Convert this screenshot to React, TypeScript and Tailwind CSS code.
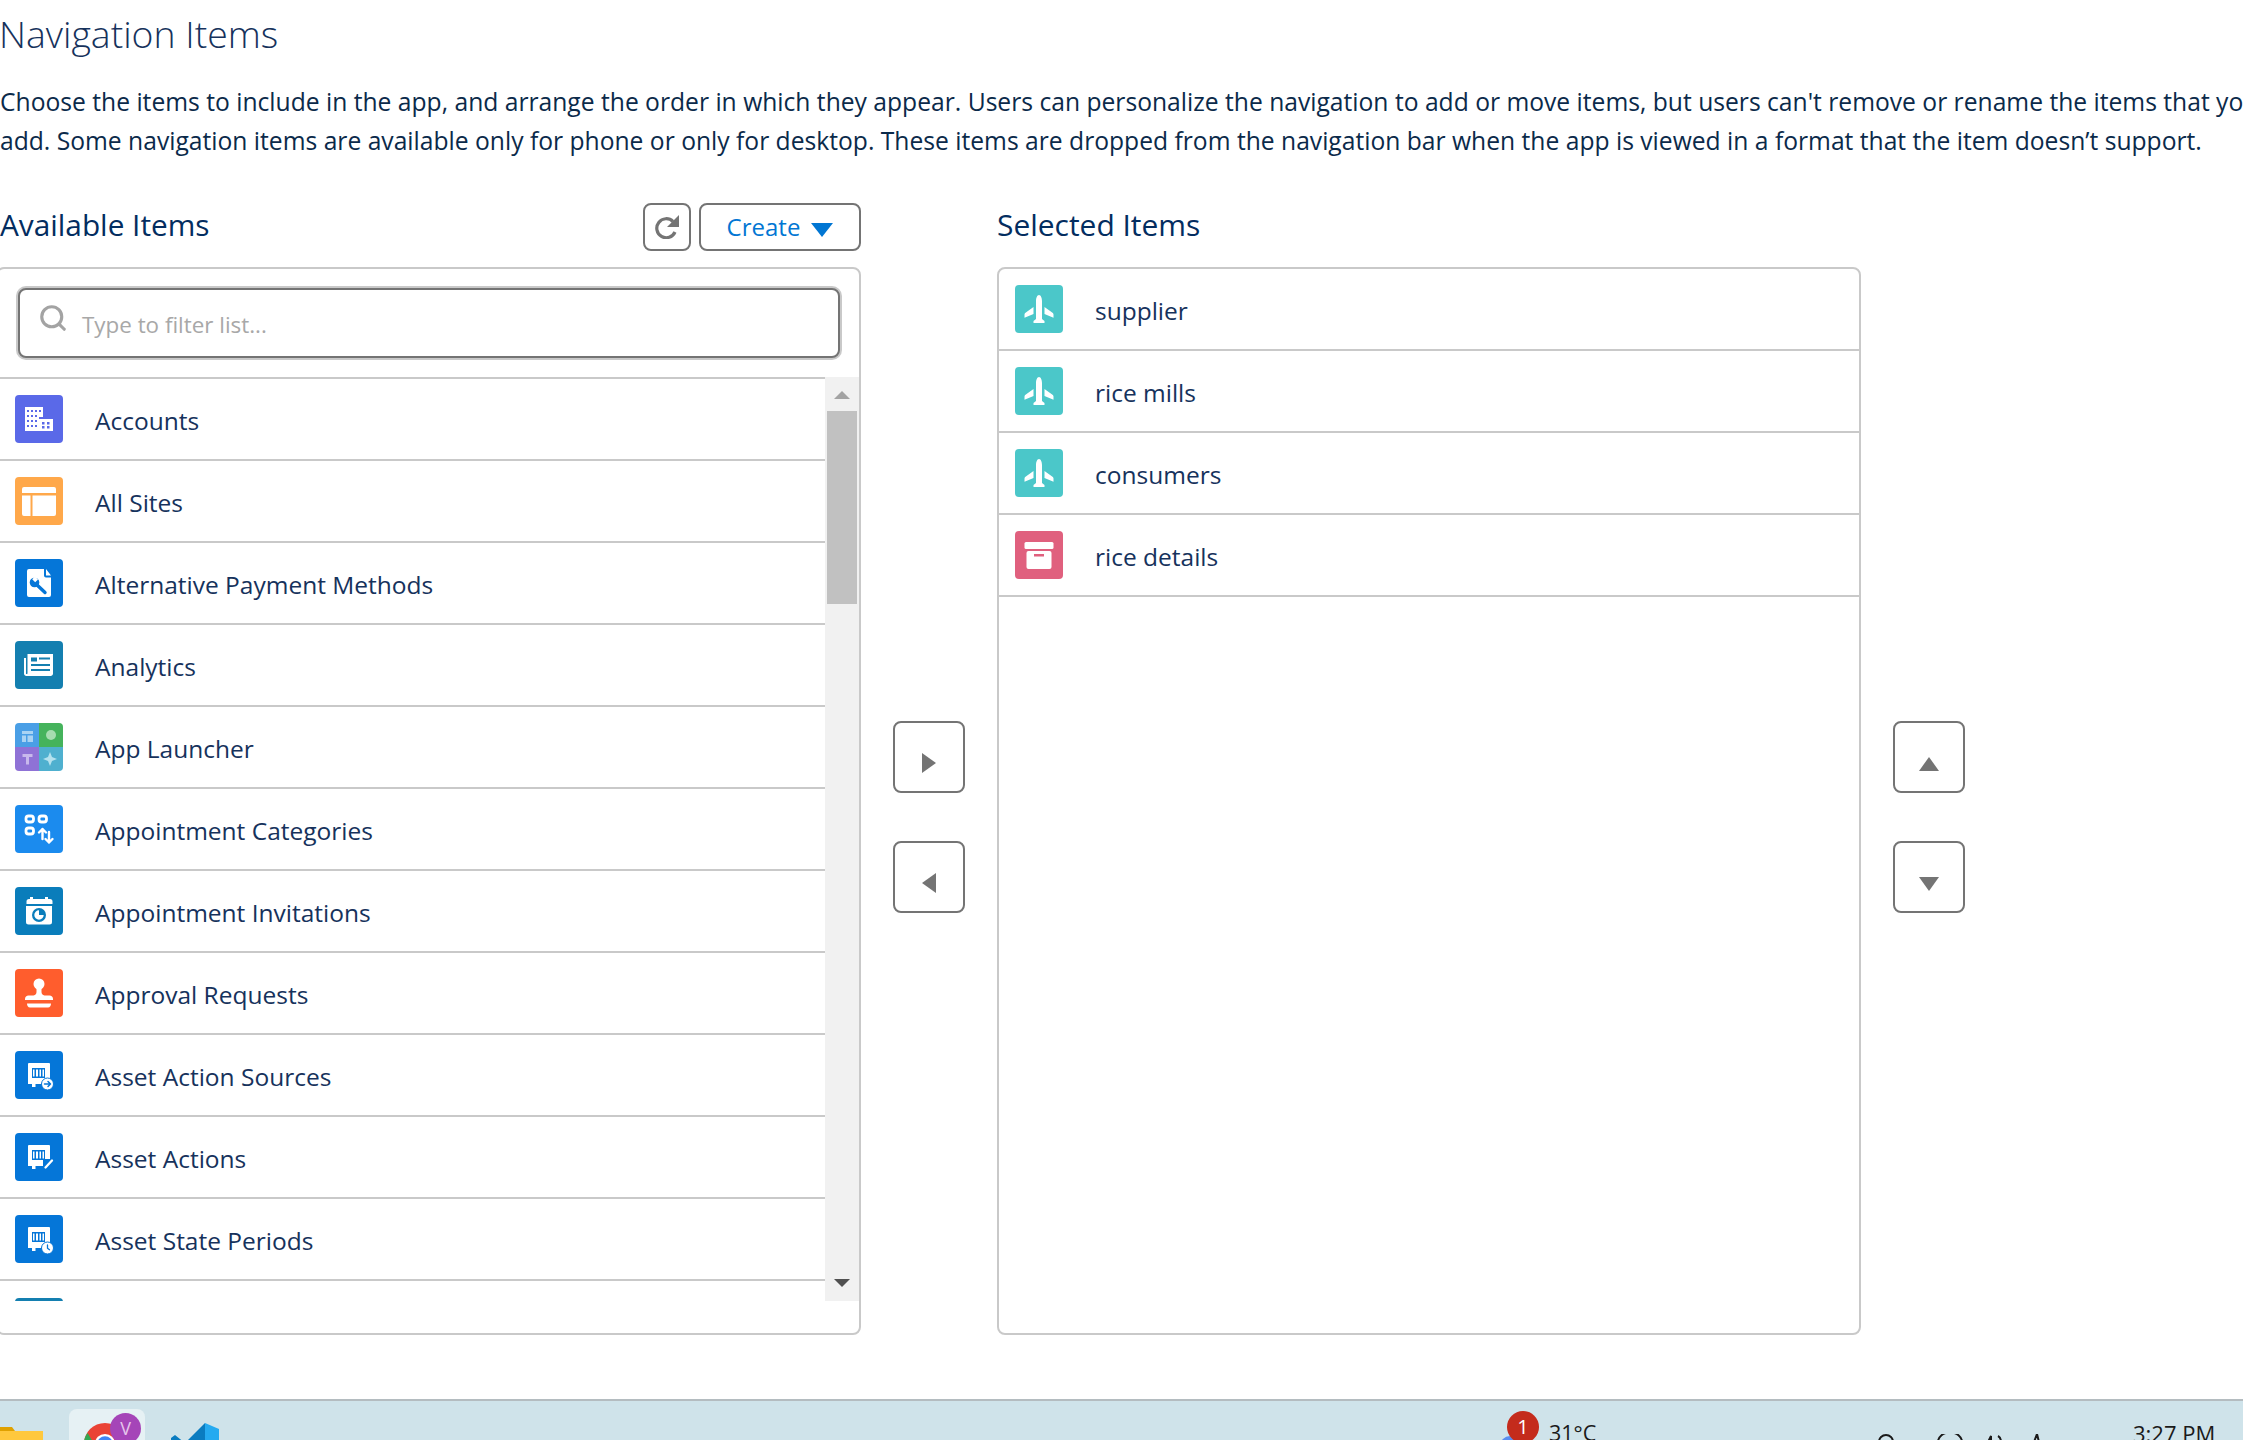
import React from 'react'
import { Search } from 'lucide-react'

const Tile = ({ color, children }: { color?: string; children?: React.ReactNode }) => (
  <svg viewBox="0 0 48 48" className="h-12 w-12 shrink-0 rounded-[4px]" style={{ background: color }}>
    {children}
  </svg>
)

const Plane = () => (
  <Tile color="#4bc7c9">
    <path fill="#fff" d="M24 10c1.800 0 3 3 3 6v18l2.500 2v2h-11v-2l2.500-2V16c0-3 1.200-6 3-6z" />
    <path fill="#fff" d="M18.500 22v7l-9 3.700V29.500c0-.8.400-1.400 1-1.800zM29.500 22v7l9 3.700V29.500c0-.8-.4-1.400-1-1.800z" />
  </Tile>
)

const Crate = () => (
  <Tile color="#e0607e">
    <rect x="9.500" y="11" width="29" height="7" rx="1.500" fill="#fff" />
    <rect x="11.500" y="20" width="25" height="18" rx="2" fill="#fff" />
    <rect x="19" y="23" width="10" height="2.500" fill="#e0607e" />
  </Tile>
)

const Accounts = () => (
  <Tile color="#5a69e8">
    <path fill="#fff" d="M10 12h18v10h-4v14H10z" />
    <rect x="24" y="24" width="14" height="12" fill="#fff" />
    <g fill="#5a69e8">
      <rect x="12" y="15" width="2" height="2" /><rect x="16" y="15" width="2" height="2" /><rect x="20" y="15" width="2" height="2" /><rect x="24" y="15" width="2" height="2" />
      <rect x="12" y="20" width="2" height="2" /><rect x="16" y="20" width="2" height="2" /><rect x="20" y="20" width="2" height="2" />
      <rect x="12" y="25" width="2" height="2" /><rect x="16" y="25" width="2" height="2" /><rect x="20" y="25" width="2" height="2" />
      <rect x="12" y="30" width="2" height="2" /><rect x="16" y="30" width="2" height="2" /><rect x="20" y="30" width="2" height="2" />
      <rect x="27" y="27" width="2.500" height="2.500" /><rect x="32" y="27" width="2.500" height="2.500" />
      <rect x="27" y="31" width="2.500" height="2.500" /><rect x="32" y="31" width="2.500" height="2.500" />
    </g>
  </Tile>
)

const AllSites = () => (
  <Tile color="#ffa84a">
    <path fill="#fff" d="M9 10h30a2 2 0 0 1 2 2v4H7v-4a2 2 0 0 1 2-2zM7 18.500h8.500V39H9a2 2 0 0 1-2-2zM17.500 18.500H41V37a2 2 0 0 1-2 2H17.500z" />
  </Tile>
)

const PaymentDoc = () => (
  <Tile color="#0576d8">
    <path fill="#fff" d="M14 10h15v6.500a2 2 0 0 0 2 2h5V36a2 2 0 0 1-2 2H14a2 2 0 0 1-2-2V12a2 2 0 0 1 2-2zM31 10l5 6.500h-5z" />
    <path stroke="#0576d8" strokeWidth="3.400" strokeLinecap="round" fill="none" d="M21 25l9 8.500" />
    <circle cx="19.500" cy="23.500" r="4.800" fill="#0576d8" />
    <path fill="#fff" d="M20 17.500l3 3-2.800 2.800-3-3z" />
  </Tile>
)

const Analytics = () => (
  <Tile color="#147fb0">
    <path fill="#fff" d="M12.500 13H38v19.500c0 1.400-1 2.500-2.500 2.500H11.500C10 35 9 33.900 9 32.500V17h2v15.500c0 .5.500.5.500.5s1 0 1-.5z" />
    <g fill="#147fb0">
      <rect x="16" y="16.500" width="6" height="4" /><rect x="24" y="16.500" width="11" height="2" />
      <rect x="16" y="23" width="19" height="2" /><rect x="16" y="28" width="19" height="2" />
    </g>
  </Tile>
)

const AppLauncher = () => (
  <Tile>
    <rect width="24" height="24" fill="#4a9fe6" />
    <rect x="24" width="24" height="24" fill="#45b35c" />
    <rect y="24" width="24" height="24" fill="#8f72d6" />
    <rect x="24" y="24" width="24" height="24" fill="#4fb0cf" />
    <path fill="#a9d3f3" d="M7 8h11v3H7zM7 12.500h4V19H7zM12.500 12.500H18V19h-5.500z" />
    <circle cx="36" cy="12" r="5" fill="#a6dcb0" />
    <path fill="#c8b8ec" d="M7.500 31h10v3h-3.500v7.500h-3V34H7.500z" />
    <path fill="#b5e2ee" d="M35 29l2 5 5 2-5 2-2 5-2-5-5-2 5-2z" />
  </Tile>
)

const Categories = () => (
  <Tile color="#1b8bee">
    <g fill="none" stroke="#fff" strokeWidth="2.800">
      <rect x="11" y="11" width="7.500" height="6" rx="2.500" />
      <rect x="24" y="11" width="7.500" height="6" rx="2.500" />
      <rect x="11" y="23" width="7.500" height="6" rx="2.500" />
    </g>
    <path fill="none" stroke="#fff" strokeWidth="2.400" strokeLinecap="round" strokeLinejoin="round" d="M27.500 34V24M24 27.500l3.500-3.500 3.500 3.500M34 27v10.500M30.500 34l3.500 3.500 3.500-3.500" />
  </Tile>
)

const Calendar = () => (
  <Tile color="#0a7dbb">
    <path fill="#fff" d="M15 10h3v2h12v-2h3v2h2a2.500 2.500 0 0 1 2.500 2.500V17h-26v-2.500A2.500 2.500 0 0 1 14 12h1zM11 19h26v16a2.500 2.500 0 0 1-2.500 2.500h-21A2.500 2.500 0 0 1 11 35z" />
    <circle cx="24" cy="28" r="7" fill="#0a7dbb" />
    <path fill="#fff" d="M24 23.300a4.700 4.700 0 1 0 4.700 4.700H24z" />
  </Tile>
)

const Stamp = () => (
  <Tile color="#ff5d2d">
    <circle cx="24" cy="15" r="5.500" fill="#fff" />
    <path fill="#fff" d="M21.500 18h5v5c0 2 1 3 3 3.500h5c2 0 3.500 1.500 3.500 3.500v1H10v-1c0-2 1.500-3.500 3.500-3.500h5c2-.5 3-1.500 3-3.500z" />
    <path fill="#fff" d="M12 34.500h24c0 2-1 4-3 4H15c-2 0-3-2-3-4z" />
  </Tile>
)

const Asset = ({ badge }: { badge: 'arrow' | 'pencil' | 'clock' }) => (
  <Tile color="#0576d8">
    <path fill="#fff" d="M14 12h20a1 1 0 0 1 1 1v20H13V13a1 1 0 0 1 1-1zM17 33h3.500v3H17z" />
    <rect x="17" y="17" width="13" height="10" fill="#0576d8" />
    <path fill="#fff" d="M18 18.500h1.500v7H18zM21 18.500h2v7h-2zM24.500 18.500H26v7h-1.500zM27.500 18.500h1.500v7h-1.500z" />
    {badge === 'pencil' ? (
      <>
        <path fill="#0576d8" d="M28 26h10v12H28z" />
        <path fill="none" stroke="#fff" strokeWidth="2.300" strokeLinecap="round" d="M30.500 34.500l6.500-7" />
      </>
    ) : (
      <circle cx="32.500" cy="33" r="6" fill="#fff" stroke="#0576d8" strokeWidth="1" />
    )}
    {badge === 'arrow' && (
      <path fill="none" stroke="#0576d8" strokeWidth="1.500" strokeLinecap="round" strokeLinejoin="round" d="M29.500 33h6M33 30.500l2.500 2.500-2.500 2.500" />
    )}
    {badge === 'clock' && (
      <path fill="none" stroke="#0576d8" strokeWidth="1.300" strokeLinecap="round" d="M32.500 30v3.200l2 1.500" />
    )}
  </Tile>
)

const items: [string, React.ReactNode][] = [
  ['Accounts', <Accounts />],
  ['All Sites', <AllSites />],
  ['Alternative Payment Methods', <PaymentDoc />],
  ['Analytics', <Analytics />],
  ['App Launcher', <AppLauncher />],
  ['Appointment Categories', <Categories />],
  ['Appointment Invitations', <Calendar />],
  ['Approval Requests', <Stamp />],
  ['Asset Action Sources', <Asset badge="arrow" />],
  ['Asset Actions', <Asset badge="pencil" />],
  ['Asset State Periods', <Asset badge="clock" />],
]

const Row = ({ label, icon, inset }: { label: string; icon: React.ReactNode; inset: string }) => (
  <div className={`flex h-[82px] shrink-0 items-center border-b-2 border-[#c9c9c9] ${inset}`}>
    {icon}
    <span className="ml-[32px] mt-[4px] text-[24.500px] text-[#16325c]">{label}</span>
  </div>
)

const MoveButton = ({ children }: { children: React.ReactNode }) => (
  <button className="flex h-[72px] w-[72px] items-center justify-center rounded-lg border-2 border-[#747474] bg-white">
    {children}
  </button>
)

export default function App() {
  return (
    <div className="flex h-[1440px] w-[2243px] flex-col overflow-hidden bg-white font-['Open_Sans',sans-serif] text-[#16325c]">
      <div className="h-[1399px] shrink-0">
        <h1 className="-ml-[1px] h-[68px] text-[37.400px] font-light leading-[68px] text-[#16325c]">Navigation Items</h1>
        <div className="mt-[14px] whitespace-nowrap text-[24.650px] leading-[39px] text-[#0b2a4a]">
          <div>
            Choose the items to include in the app, and arrange the order in which they appear. Users can personalize the navigation to add or move items, but users can't remove or rename the items that you
          </div>
          <div>
            add. Some navigation items are available only for phone or only for desktop. These items are dropped from the navigation bar when the app is viewed in a format that the item doesn’t support.
          </div>
        </div>

        <div className="mt-[43px] flex gap-[32px]">
          <div className="-ml-[4px] w-[865px] shrink-0">
            <div className="flex h-[48px] items-center pl-[4px]">
              <h2 className="-mt-[4px] flex-1 text-[29.800px] text-[#032d60]">Available Items</h2>
              <button className="flex h-[48px] w-[48px] items-center justify-center rounded-lg border-2 border-[#747474]">
                <svg viewBox="0 0 24 24" className="h-[24px] w-[24px]" fill="none" stroke="#747474" strokeWidth="3.200">
                  <path d="M18 6.500A9.500 9.500 0 1 0 20 17" />
                  <path fill="#747474" stroke="none" d="M24 0v12H12z" />
                </svg>
              </button>
              <button className="ml-[8px] flex h-[48px] w-[162px] items-center justify-center gap-[11px] rounded-lg border-2 border-[#747474]">
                <span className="text-[24px] text-[#0176d3]">Create</span>
                <svg viewBox="0 0 22 14" className="mt-[6px] h-[14px] w-[22px]">
                  <path fill="#0176d3" d="M0 0h22L11 14z" />
                </svg>
              </button>
            </div>
            <div className="mt-[16px] flex h-[1068px] flex-col rounded-lg border-2 border-[#c9c9c9] bg-white">
              <div className="ml-[18px] mr-[17px] mt-[17px] rounded-[10px] bg-[#c9c9c9] p-[2px]">
                <div className="flex h-[70px] items-center rounded-lg border-2 border-[#747474] bg-white pl-[18px]">
                  <Search className="-mt-[10px] h-[30px] w-[30px] text-[#a3a3a3]" strokeWidth={2.500} />
                  <span className="ml-[14px] mt-[3px] text-[22.400px] text-[#a8a8a8]">Type to filter list...</span>
                </div>
              </div>
              <div className="mt-[17px] flex h-[924px] overflow-hidden">
                <div className="flex-1 overflow-hidden">
                  <div className="h-[2px] bg-[#c9c9c9]" />
                  {items.map(([label, icon]) => (
                    <Row key={label} label={label} icon={icon} inset="pl-[17px]" />
                  ))}
                  <div className="ml-[17px] mt-[17px] h-12 w-12 rounded-[4px] bg-[#147fb0]" />
                </div>
                <div className="flex w-[34px] shrink-0 flex-col items-center bg-[#f1f1f1]">
                  <svg viewBox="0 0 16 8" className="mt-[14px] h-2 w-4 shrink-0">
                    <path fill="#a3a3a3" d="M8 0l8 8H0z" />
                  </svg>
                  <div className="mt-[12px] h-[193px] w-[30px] shrink-0 bg-[#c1c1c1]" />
                  <svg viewBox="0 0 16 8" className="mb-[14px] mt-auto h-2 w-4 shrink-0">
                    <path fill="#505050" d="M0 0h16L8 8z" />
                  </svg>
                </div>
              </div>
            </div>
          </div>

          <div className="flex flex-col gap-[48px] pt-[518px]">
            <MoveButton>
              <svg viewBox="0 0 14 20" className="mt-[12px] h-5 w-[14px]">
                <path fill="#747474" d="M0 0l14 10L0 20z" />
              </svg>
            </MoveButton>
            <MoveButton>
              <svg viewBox="0 0 14 20" className="mt-[12px] h-5 w-[14px]">
                <path fill="#747474" d="M14 0L0 10l14 10z" />
              </svg>
            </MoveButton>
          </div>

          <div className="w-[864px] shrink-0">
            <div className="flex h-[48px] items-center">
              <h2 className="-mt-[4px] text-[29.950px] text-[#032d60]">Selected Items</h2>
            </div>
            <div className="mt-[16px] h-[1068px] rounded-lg border-2 border-[#c9c9c9] bg-white">
              <Row label="supplier" icon={<Plane />} inset="pl-[16px]" />
              <Row label="rice mills" icon={<Plane />} inset="pl-[16px]" />
              <Row label="consumers" icon={<Plane />} inset="pl-[16px]" />
              <Row label="rice details" icon={<Crate />} inset="pl-[16px]" />
            </div>
          </div>

          <div className="flex flex-col gap-[48px] pt-[518px]">
            <MoveButton>
              <svg viewBox="0 0 20 14" className="mt-[14px] h-[14px] w-5">
                <path fill="#747474" d="M10 0l10 14H0z" />
              </svg>
            </MoveButton>
            <MoveButton>
              <svg viewBox="0 0 20 14" className="mt-[14px] h-[14px] w-5">
                <path fill="#747474" d="M0 0h20L10 14z" />
              </svg>
            </MoveButton>
          </div>
        </div>
      </div>

      <div className="relative h-[41px] shrink-0 overflow-hidden border-t-2 border-[#b4bcc0] bg-[#cfe3ea]">
        <svg viewBox="0 0 44 20" className="absolute left-0 top-[26px] h-5 w-11">
          <path fill="#e0a100" d="M0 0h12l3 4h-15z" />
          <path fill="#ffc83d" d="M0 4h43v16H0z" />
        </svg>
        <div className="absolute left-[69px] top-[8px] h-[40px] w-[76px] rounded-lg bg-[#e6f1f4]" />
        <svg viewBox="0 0 48 48" className="absolute left-[83px] top-[21px] h-[44px] w-[44px]">
          <circle cx="24" cy="24" r="23" fill="#ea4335" />
          <path fill="#34a853" d="M1 24c0-5 1.500-9 4-12l12 20-9 9C4 37 1 31 1 24z" />
          <circle cx="24" cy="24" r="11" fill="#fff" />
          <circle cx="24" cy="24" r="8.500" fill="#4285f4" />
        </svg>
        <div className="absolute left-[110px] top-[12px] flex h-[31px] w-[31px] items-center justify-center rounded-full bg-[#a545b8] text-[18px] text-[#e6c6ec]">
          V
        </div>
        <svg viewBox="0 0 48 48" className="absolute left-[171px] top-[22px] h-12 w-12">
          <path fill="#0a7cc0" d="M34 0L14 20 4 12 0 15v18l4 3 10-8 20 20z" />
          <path fill="#25aaf0" d="M34 0l14 6v36l-14 6z" />
        </svg>
        <svg viewBox="0 0 20 10" className="absolute left-[1500px] top-[35px] h-[10px] w-[20px]">
          <circle cx="10" cy="10" r="10" fill="#5b8def" />
        </svg>
        <div className="absolute left-[1507px] top-[10px] flex h-[32px] w-[32px] items-center justify-center rounded-full bg-[#c42b1c] text-[20px] text-white">
          1
        </div>
        <span className="absolute left-[1549px] top-[17px] text-[21.500px] leading-[30px] text-[#1a1a1a]">31°C</span>
        <svg viewBox="0 0 180 8" className="absolute left-[1878px] top-[33px] h-2 w-[180px]" fill="none" stroke="#1a1a1a" strokeWidth="2">
          <path d="M1 8a7 7 0 0 1 14 0M60 8a10 8 0 0 1 24 0M110 8l3-6v6M120 2c2 1 3 3 3 6M156 8l3-8 2 8h10" />
        </svg>
        <span className="absolute left-[2133px] top-[17px] text-[22px] leading-[30px] text-[#1a1a1a]">3:27 PM</span>
      </div>
    </div>
  )
}
